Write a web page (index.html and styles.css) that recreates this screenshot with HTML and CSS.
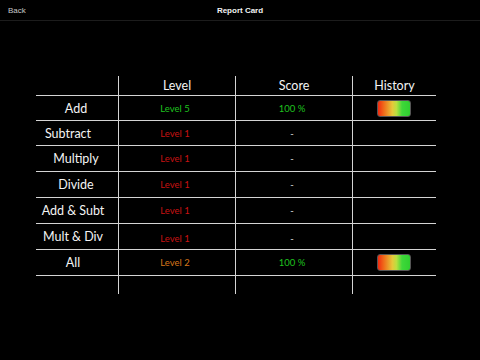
FILE: index.html
```html
<!DOCTYPE html>
<html>
<head>
<meta charset="utf-8">
<link rel="stylesheet" href="styles.css">
</head>
<body>
<header class="topbar">
  <span class="back">Back</span>
  <span class="title">Report Card</span>
</header>
<main class="content">
  <div class="table">
    <div class="cell"></div>
    <div class="cell col head">Level</div>
    <div class="cell col head">Score</div>
    <div class="cell col head">History</div>

    <div class="cell row label">Add</div>
    <div class="cell row col small green">Level 5</div>
    <div class="cell row col small green">100 %</div>
    <div class="cell row col"><span class="bar"></span></div>

    <div class="cell row label sub">Subtract</div>
    <div class="cell row col small red">Level 1</div>
    <div class="cell row col small dash">-</div>
    <div class="cell row col"></div>

    <div class="cell row label">Multiply</div>
    <div class="cell row col small red">Level 1</div>
    <div class="cell row col small dash">-</div>
    <div class="cell row col"></div>

    <div class="cell row label">Divide</div>
    <div class="cell row col small red">Level 1</div>
    <div class="cell row col small dash">-</div>
    <div class="cell row col"></div>

    <div class="cell row label shift">Add &amp; Subt</div>
    <div class="cell row col small red">Level 1</div>
    <div class="cell row col small dash">-</div>
    <div class="cell row col"></div>

    <div class="cell row label shift">Mult &amp; Div</div>
    <div class="cell row col small red low">Level 1</div>
    <div class="cell row col small dash low">-</div>
    <div class="cell row col"></div>

    <div class="cell row label shift">All</div>
    <div class="cell row col small orange">Level 2</div>
    <div class="cell row col small green">100 %</div>
    <div class="cell row col"><span class="bar"></span></div>

    <div class="cell row"></div>
    <div class="cell row col"></div>
    <div class="cell row col"></div>
    <div class="cell row col"></div>
  </div>
</main>
</body>
</html>
```

FILE: styles.css
```css
html, body {
  margin: 0;
  padding: 0;
  background: #000;
  width: 480px;
  height: 360px;
  overflow: hidden;
}

.topbar {
  position: relative;
  height: 21px;
  border-bottom: 1px solid #1c1c1c;
  box-sizing: border-box;
  display: flex;
  align-items: center;
  justify-content: center;
  font-family: "Liberation Sans", Arial, sans-serif;
  font-size: 8px;
}

.back {
  position: absolute;
  left: 8px;
  top: 6px;
  color: #c8c8c8;
}

.title {
  color: #f2f2f2;
  font-weight: bold;
  margin-top: 1px;
}

.content {
  padding: 55px 0 0 36px;
}

.table {
  display: grid;
  grid-template-columns: 82px 117px 117px 84px;
  grid-template-rows: 19px 25px 25px 26px 26px 26px 26px 26px 19px;
  font-family: Lato, "Noto Sans", sans-serif;
  color: #f4f4f4;
}

.cell {
  display: flex;
  align-items: center;
  justify-content: center;
  box-sizing: border-box;
}

.row {
  border-top: 1px solid #d4d4d4;
}

.col {
  border-left: 1px solid #d4d4d4;
}

.head {
  font-size: 12.5px;
}

.label {
  font-size: 12.5px;
  padding-right: 2px;
}

.label.sub {
  padding-right: 18px;
}

.label.shift {
  padding-right: 8px;
}

.small {
  font-size: 9.5px;
  padding-right: 4px;
}

.low {
  padding-top: 3px;
}

.green { color: #1fc21f; }
.red { color: #c81212; }
.orange { color: #d7761a; }
.dash { color: #e0e0e0; }

.bar {
  width: 34px;
  height: 17px;
  border-radius: 3px;
  box-sizing: border-box;
  border: 1px solid #555;
  margin-right: 1px;
  background: linear-gradient(to right, #f02a10 0%, #f06a1a 18%, #e6c83a 45%, #b8e040 58%, #3fd83a 75%, #2fcf2f 100%);
}
```
